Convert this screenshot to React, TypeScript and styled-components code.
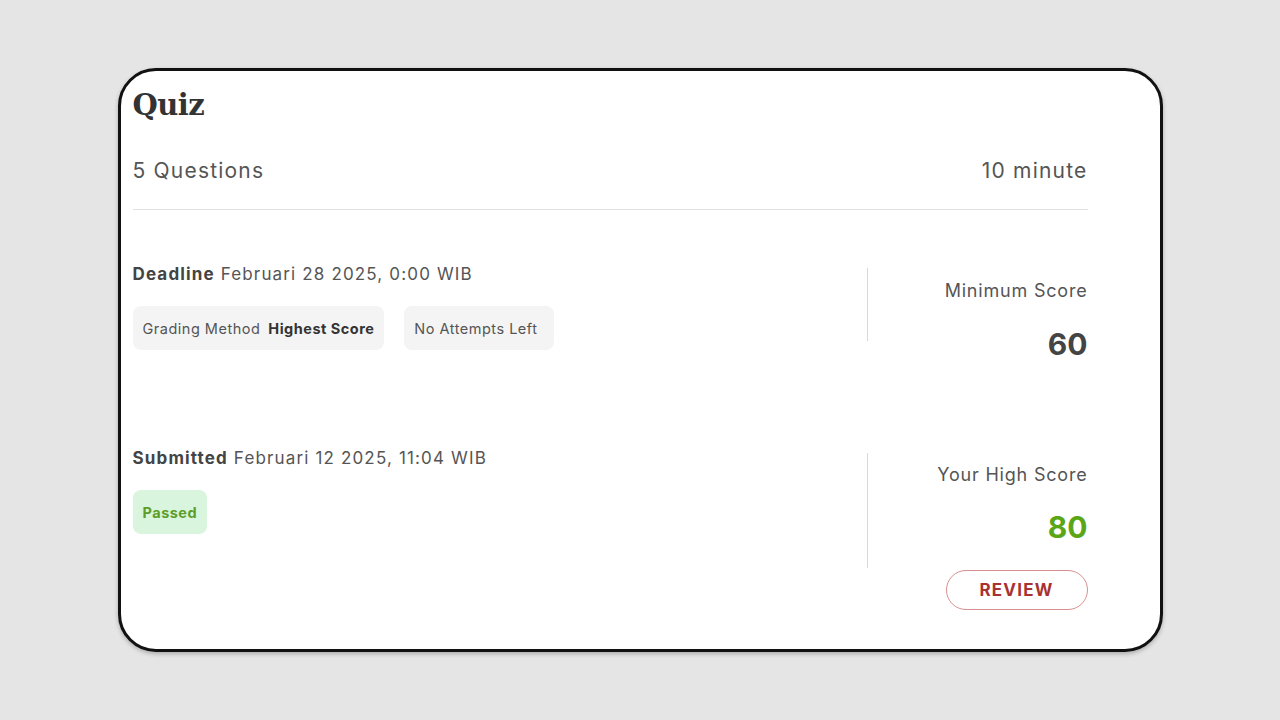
import React from "react";
import styled, { createGlobalStyle } from "styled-components";

const Global = createGlobalStyle`
  html, body { margin: 0; padding: 0; }
  body { background: #e5e5e5; font-family: Inter, "Noto Sans", sans-serif; }
  * { box-sizing: border-box; }
`;

const Page = styled.div`
  width: 1280px;
  height: 720px;
  display: flex;
  align-items: center;
  justify-content: center;
`;

const Card = styled.div`
  width: 1045px;
  height: 584px;
  background: #fff;
  border: 3px solid #111;
  border-radius: 38px;
  box-shadow: 0 2px 4px rgba(0,0,0,0.25);
  padding: 16px 72px 0 12px;
  display: flex;
  flex-direction: column;
`;

const Title = styled.h1`
  margin: 0;
  font-family: "DejaVu Serif", serif;
  font-weight: 700;
  font-size: 29px;
  line-height: 36px;
  color: #333;
  letter-spacing: -0.5px;
`;

const MetaRow = styled.div`
  margin-top: 35px;
  display: flex;
  justify-content: space-between;
  font-size: 21px;
  line-height: 25px;
  letter-spacing: 1.2px;
  color: #555;
  padding-bottom: 26px;
  border-bottom: 1.5px solid #e2e2e2;
`;

const Section = styled.div<{ $top: number }>`
  margin-top: ${(p) => p.$top}px;
  display: flex;
  align-items: flex-start;
`;

const Left = styled.div`
  flex: 1;
  display: flex;
  flex-direction: column;
`;

const InfoLine = styled.div`
  font-size: 17px;
  line-height: 22px;
  letter-spacing: 1.15px;
  color: #555;
  b { color: #444; font-weight: 700; }
`;

const Chips = styled.div`
  margin-top: 21px;
  display: flex;
  gap: 20px;
`;

const Chip = styled.div<{ $green?: boolean; $padRight?: number }>`
  height: 44px;
  padding: 0 ${(p) => p.$padRight ?? 10}px 0 10px;
  display: flex;
  align-items: center;
  gap: 8px;
  border-radius: 8px;
  font-size: 14.5px;
  letter-spacing: 0.5px;
  background: ${(p) => (p.$green ? "#d9f5de" : "#f4f4f4")};
  color: ${(p) => (p.$green ? "#5c9e27" : "#555")};
  font-weight: ${(p) => (p.$green ? 700 : 400)};
  b { color: #333; font-weight: 700; }
`;

const Right = styled.div`
  width: 221px;
  display: flex;
  flex-direction: column;
  align-items: flex-end;
`;

const Stat = styled.div<{ $h: number; $offset: number; $pad: number }>`
  align-self: stretch;
  margin-top: ${(p) => p.$offset}px;
  height: ${(p) => p.$h}px;
  border-left: 1px solid #d8d8d8;
  display: flex;
  flex-direction: column;
  align-items: flex-end;
  padding-top: ${(p) => p.$pad}px;
`;

const StatLabel = styled.div`
  font-size: 18px;
  line-height: 22px;
  letter-spacing: 0.8px;
  color: #555;
`;

const StatValue = styled.div<{ $green?: boolean; $gap: number }>`
  margin-top: ${(p) => p.$gap}px;
  font-size: 30px;
  line-height: 32px;
  font-weight: 700;
  color: ${(p) => (p.$green ? "#5aa617" : "#444")};
`;

const ReviewButton = styled.button`
  margin-top: 2px;
  width: 142px;
  height: 40px;
  border: 1.5px solid #d89090;
  border-radius: 20px;
  background: #fff;
  color: #a83232;
  font-family: Inter, sans-serif;
  font-size: 17px;
  font-weight: 700;
  letter-spacing: 1.2px;
`;

export default function App() {
  return (
    <>
      <Global />
      <Page>
        <Card>
          <Title>Quiz</Title>
          <MetaRow>
            <span>5 Questions</span>
            <span>10 minute</span>
          </MetaRow>
          <Section $top={53}>
            <Left>
              <InfoLine>
                <b>Deadline</b> Februari 28 2025, 0:00 WIB
              </InfoLine>
              <Chips>
                <Chip>
                  Grading Method <b>Highest Score</b>
                </Chip>
                <Chip $padRight={17}>No Attempts Left</Chip>
              </Chips>
            </Left>
            <Right>
              <Stat $h={73} $offset={5} $pad={12}>
                <StatLabel>Minimum Score</StatLabel>
                <StatValue $gap={26}>60</StatValue>
              </Stat>
            </Right>
          </Section>
          <Section $top={97}>
            <Left>
              <InfoLine>
                <b>Submitted</b> Februari 12 2025, 11:04 WIB
              </InfoLine>
              <Chips>
                <Chip $green>Passed</Chip>
              </Chips>
            </Left>
            <Right>
              <Stat $h={115} $offset={6} $pad={11}>
                <StatLabel>Your High Score</StatLabel>
                <StatValue $green $gap={25}>80</StatValue>
              </Stat>
              <ReviewButton>REVIEW</ReviewButton>
            </Right>
          </Section>
        </Card>
      </Page>
    </>
  );
}
